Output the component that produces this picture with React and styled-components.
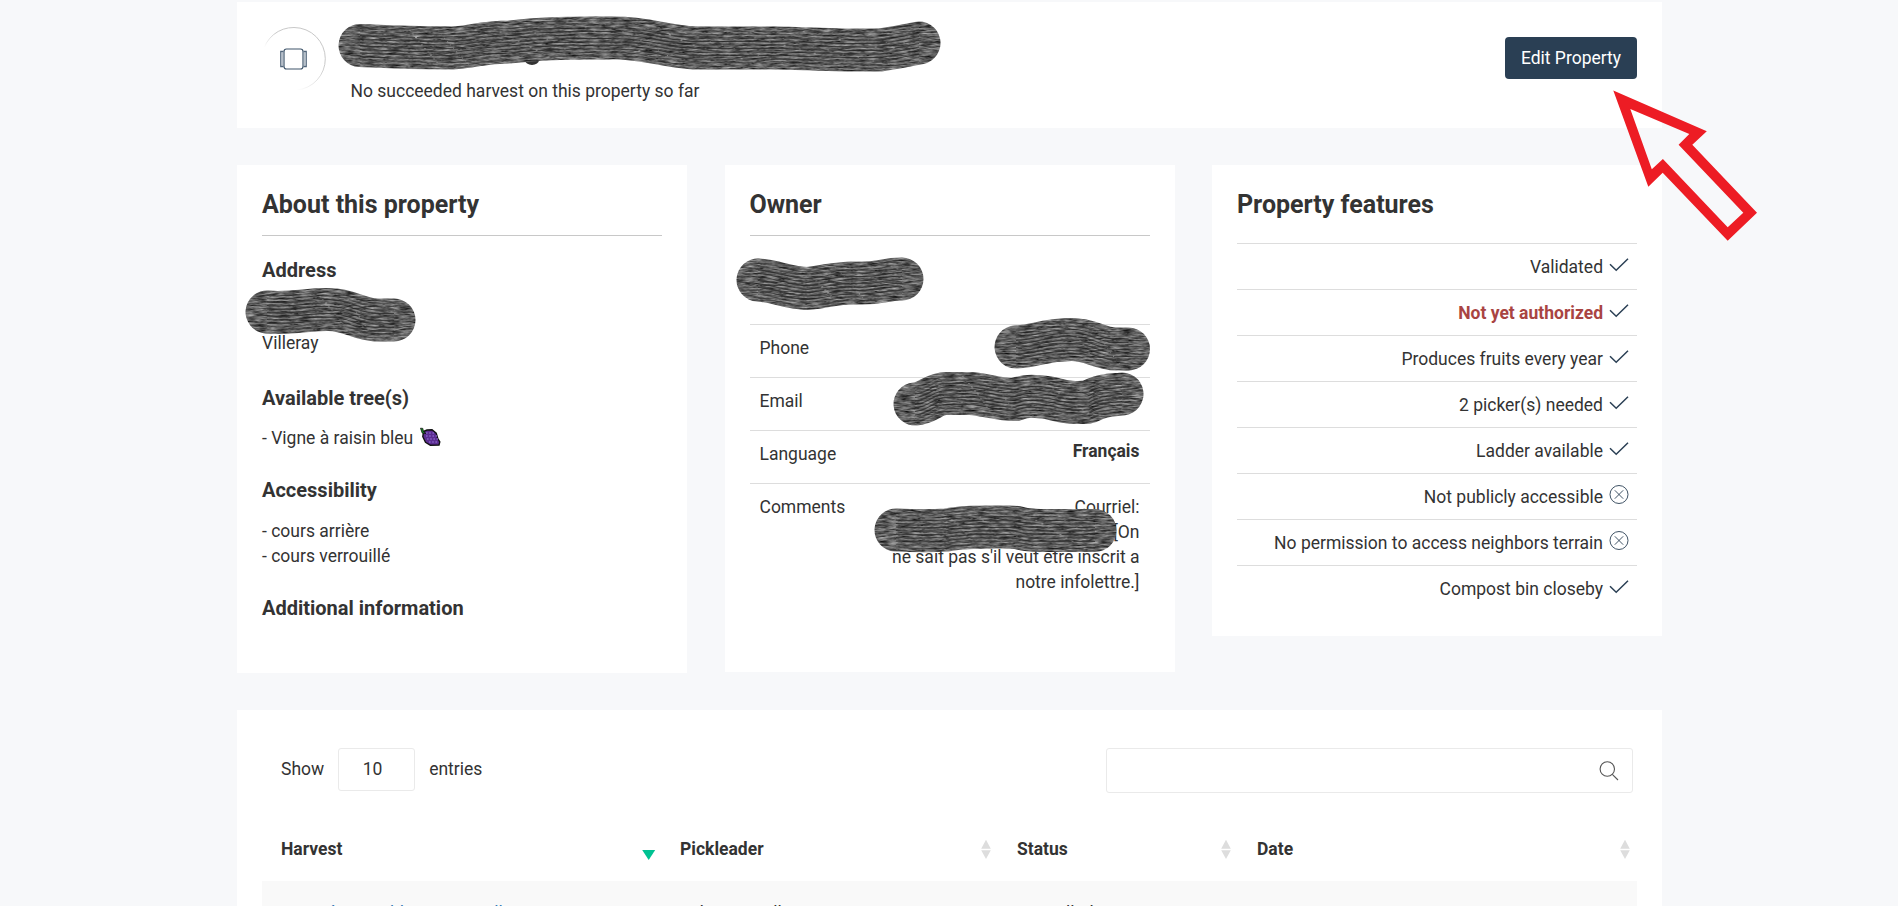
import React from "react";
import styled, { createGlobalStyle, css } from "styled-components";

const GlobalStyle = createGlobalStyle`
  *, *::before, *::after { box-sizing: border-box; }
  body {
    margin: 0;
    background: #f7f8fa;
    color: #333;
    font: 17.5px/25px Roboto, "Liberation Sans", sans-serif;
    overflow: hidden;
  }
`;

const Page = styled.div`
  position: relative;
  height: 906px;
  overflow: hidden;
`;

const Container = styled.main`
  width: 1425px;
  margin: 0 auto 0 237px;
  padding-top: 2px;
`;

const Header = styled.header`
  display: flex;
  height: 126px;
  padding: 20px 25px;
  background: #fff;
`;

const Avatar = styled.svg`
  width: 64px;
  height: 74px;
  flex: none;
`;

const HeaderText = styled.div`
  flex: 1;
  padding: 57px 0 0 24.5px;
`;

const Button = styled.button`
  width: 132px;
  height: 42px;
  margin-top: 15px;
  padding: 0;
  border: 0;
  border-radius: 4px;
  background: #2a3f54;
  color: #fff;
  font: inherit;
  white-space: nowrap;
`;

const Columns = styled.div`
  display: flex;
  align-items: flex-start;
  justify-content: space-between;
  margin: 37px 0;
`;

const Card = styled.section`
  width: 450px;
  height: ${(p) => p.$height}px;
  padding: 25px;
  background: #fff;
`;

const CardTitle = styled.h3`
  margin: 0;
  padding-top: 1px;
  height: ${(p) => (p.$ruled ? 46 : 53)}px;
  border-bottom: ${(p) => (p.$ruled ? "1px solid #c8c8c8" : "0")};
  font-size: 25px;
  line-height: 28px;
  font-weight: 700;
`;

const SectionTitle = styled.h5`
  margin: ${(p) => p.$top}px 0 ${(p) => p.$bottom}px;
  font-size: 20px;
  line-height: 21px;
  font-weight: 700;
`;

const Line = styled.div`
  display: flex;
  align-items: center;
  height: 25px;
  padding-top: 1px;
  white-space: nowrap;
`;

const OwnerName = styled.div`
  height: 88px;
`;

const OwnerRow = styled.div`
  display: flex;
  justify-content: space-between;
  min-height: 53px;
  padding: 11px 10px 9px;
  border-top: 1px solid #ddd;
`;

const OwnerValue = styled.div`
  width: 266px;
  text-align: right;
  ${(p) => p.$strong && css`
    font-weight: 700;
    margin-top: -3px;
  `}
`;

const Feature = styled.div`
  display: flex;
  justify-content: flex-end;
  gap: 6px;
  height: 46px;
  padding: 11px 8px 9px 0;
  border-top: 1px solid #ddd;
  color: ${(p) => (p.$alert ? "#a94442" : "#333")};
  font-weight: ${(p) => (p.$alert ? 700 : 400)};
`;

const FeatureIcon = styled.svg`
  width: 20px;
  height: 22px;
  margin-top: -1px;
  flex: none;
  fill: none;
  stroke: #2a3f54;
`;

const TableCard = styled.section`
  height: 220px;
  padding: 38px 25px 0;
  background: #fff;
`;

const TableTools = styled.div`
  display: flex;
  justify-content: space-between;
  padding: 0 4px 0 19px;
  height: 89px;
`;

const LengthControl = styled.label`
  display: flex;
  align-items: center;
  gap: 14.5px;
  height: 43px;
  padding-bottom: 1px;
`;

const LengthBox = styled.span`
  width: 77px;
  height: 43px;
  margin: 0 0 -1px -1px;
  padding: 8px 24px;
  border: 1px solid #eaeaea;
  border-radius: 3px;
`;

const SearchBox = styled.div`
  display: flex;
  justify-content: flex-end;
  width: 527px;
  height: 45px;
  padding: 12px 13px 0 0;
  border: 1px solid #eaeaea;
  border-radius: 3px;
`;

const TableRow = styled.div`
  display: grid;
  grid-template-columns: 399px 337px 240px 399px;
  ${(p) => p.$striped ? css`
    height: 80px;
    padding-top: 20px;
    background: #f9f9f9;
  ` : css`
    height: 44px;
    font-weight: 700;
  `}
`;

const Cell = styled.div`
  display: flex;
  justify-content: space-between;
  align-items: flex-start;
  padding: 0 4px 0 19px;
  white-space: nowrap;
  color: ${(p) => (p.$link ? "#337ab7" : "inherit")};
`;

const SortIcon = styled.svg`
  width: 16px;
  height: 25px;
  flex: none;
`;

const GrapeIcon = styled.svg`
  width: 22px;
  height: 22px;
  margin-left: 6px;
`;

const Markup = styled.svg`
  position: absolute;
  inset: 0;
  width: 1898px;
  height: 906px;
  pointer-events: none;
`;

const Check = () => (
  <FeatureIcon viewBox="0 0 20 22" strokeWidth="1.5">
    <path d="M1 10.3 7.2 16.2 19 4.8" />
  </FeatureIcon>
);

const CircledX = () => (
  <FeatureIcon viewBox="0 0 20 22" strokeWidth="0.9">
    <circle cx="10" cy="10.5" r="9" />
    <path d="m5.8 6.3 8.4 8.4m0-8.4-8.4 8.4" />
  </FeatureIcon>
);

const Grape = () => (
  <GrapeIcon viewBox="0 0 22 22">
    <path d="M4.5 4.5 8 3l5-.2 4.2 3.4 1.6 5.4 2 3.2-.8 3.3-8.6.2-4.9-3-2.7-5.6Z" fill="#5b2d91" stroke="#111" strokeWidth="1.4" />
    <path d="m1.5 1.2 2.3.2.6 3L7 6.6 3.2 6Z" fill="#159a24" stroke="#111" strokeWidth="0.8" />
    <path d="M7 6h9M7 9h11M8 12h11M10 15h9" stroke="#8560c4" strokeWidth="1.3" strokeDasharray="1.6 1.6" />
  </GrapeIcon>
);

const Sort = ({ active }) => (
  <SortIcon viewBox="0 0 16 25">
    {active ? (
      <path d="M1.2 13h13L7.7 23Z" fill="#00c292" />
    ) : (
      <path d="M3.2 11.7h9.6L8 2.8ZM3.2 13.2h9.6L8 22Z" fill="#ddd" />
    )}
  </SortIcon>
);

const features = [
  ["Validated", true],
  ["Not yet authorized", true, true],
  ["Produces fruits every year", true],
  ["2 picker(s) needed", true],
  ["Ladder available", true],
  ["Not publicly accessible", false],
  ["No permission to access neighbors terrain", false],
  ["Compost bin closeby", true],
];

const strokes = [
  "M360 45.5C390 47 430 48 452 48C475 47 480 42 510 42C550 37 585 38 615 38C645 38 665 46 694 48L780 48L845 50L880 50Q900 47 919 43",
  "M267 312C292 314 310 309 329 309.500C350 310 358 319 376 320H394",
  "M758 280C776 281 787 288 808 288.500C830 286 838 282 858 283C880 284 883 279 902 279",
  "M1016 347C1038 346 1041 340 1071 339.500C1090 339 1100 349 1116 349H1128.500",
  "M915 404C928 403 934 393.500 946 393.500H970C985 394 997 400 1015 399.500C1027 395 1035 396 1050 398C1067 403 1077 403 1089 402C1102 394 1115 395 1122 394",
  "M896 530C915 531 933 531 947 530C965 526 987 527 1010 527C1021 527 1018 530 1040 530.500H1095",
];

const bristles = [-17, -13.5, -10, -6.5, -3, 0.5, 4, 7.5, 11, 14.5, 18];

const Scribble = ({ d }) => (
  <g fill="none" strokeLinejoin="round">
    <path d={d} stroke="#5b5b5b" strokeWidth="43" strokeLinecap="round" filter="url(#grain)" />
    {bristles.map((y, i) => (
      <g key={y} transform={`translate(0 ${y})`}>
        <path d={d} stroke="#2a2a2a" strokeWidth="1.1" opacity={Math.abs(y) > 12 ? 0.4 : 0.75} strokeDasharray={`${49 + i * 3} 2 27 1`} />
        <path d={d} transform="translate(0 1.4)" stroke="#aaa" strokeWidth="0.8" opacity="0.35" strokeDasharray={`2 ${2 + (i % 3)} 17 2`} />
      </g>
    ))}
  </g>
);

export default function App() {
  return (
    <Page>
      <GlobalStyle />
      <Container>
        <Header>
          <Avatar viewBox="0 0 64 74">
            <defs>
              <linearGradient id="ring" x1="0" y1="0.7" x2="0.5" y2="0.3">
                <stop offset="0" stopColor="#c8c8c8" stopOpacity="0" />
                <stop offset="1" stopColor="#c8c8c8" />
              </linearGradient>
              <linearGradient id="ringEnd" x1="0" y1="1" x2="0.8" y2="0">
                <stop offset="0" stopColor="#c8c8c8" stopOpacity="0" />
                <stop offset="1" stopColor="#c8c8c8" />
              </linearGradient>
            </defs>
            <g fill="none">
              <path d="M.6 31A31.500 31.500 0 0 1 32 5.500" stroke="url(#ring)" />
              <path d="M32 5.500A31.300 31.300 0 0 1 63.300 36.800" stroke="#c8c8c8" />
              <path d="M63.300 36.800A31.300 31.300 0 0 1 35 68" stroke="url(#ringEnd)" />
              <rect x="22" y="27" width="19" height="20" rx="2.500" stroke="#3f556b" strokeWidth="1.200" />
              <path d="M21.500 29.500h-2.700v15h2.700M41.500 29.500h2.700v15h-2.700" stroke="#53677c" strokeWidth="1.300" />
              <path d="M20.300 30v14M42.700 30v14" stroke="#a4b0bd" />
            </g>
          </Avatar>
          <HeaderText>No succeeded harvest on this property so far</HeaderText>
          <Button>Edit Property</Button>
        </Header>

        <Columns>
          <Card $height={508}>
            <CardTitle $ruled>About this property</CardTitle>
            <SectionTitle $top={24} $bottom={24}>Address</SectionTitle>
            <Line />
            <Line>Villeray</Line>
            <SectionTitle $top={33} $bottom={16}>Available tree(s)</SectionTitle>
            <Line>- Vigne à raisin bleu <Grape /></Line>
            <SectionTitle $top={30} $bottom={17}>Accessibility</SectionTitle>
            <Line>- cours arrière</Line>
            <Line>- cours verrouillé</Line>
            <SectionTitle $top={30} $bottom={0}>Additional information</SectionTitle>
          </Card>

          <Card $height={507}>
            <CardTitle $ruled>Owner</CardTitle>
            <OwnerName />
            <OwnerRow><span>Phone</span></OwnerRow>
            <OwnerRow><span>Email</span></OwnerRow>
            <OwnerRow>
              <span>Language</span>
              <OwnerValue $strong>Français</OwnerValue>
            </OwnerRow>
            <OwnerRow>
              <span>Comments</span>
              <OwnerValue>Courriel:<br />[On<br />ne sait pas s'il veut être inscrit a<br />notre infolettre.]</OwnerValue>
            </OwnerRow>
          </Card>

          <Card $height={471}>
            <CardTitle>Property features</CardTitle>
            {features.map(([label, ok, alert]) => (
              <Feature key={label} $alert={alert}>
                <span>{label}</span>
                {ok ? <Check /> : <CircledX />}
              </Feature>
            ))}
          </Card>
        </Columns>

        <TableCard>
          <TableTools>
            <LengthControl>
              <span>Show</span>
              <LengthBox>10</LengthBox>
              <span>entries</span>
            </LengthControl>
            <SearchBox>
              <svg width="20" height="20" viewBox="0 0 20 20" fill="none" stroke="#555" strokeWidth="1.1">
                <ellipse cx="8.300" cy="8" rx="7.200" ry="7.300" />
                <path d="m13.300 13.300 5.700 5.700" />
              </svg>
            </SearchBox>
          </TableTools>
          <TableRow>
            <Cell>Harvest<Sort active /></Cell>
            <Cell>Pickleader<Sort /></Cell>
            <Cell>Status<Sort /></Cell>
            <Cell>Date<Sort /></Cell>
          </TableRow>
          <TableRow $striped>
            <Cell $link>Vigne à raisin bleu, cours Villeray</Cell>
            <Cell>John Connell</Cell>
            <Cell>Cancelled</Cell>
            <Cell />
          </TableRow>
        </TableCard>
      </Container>

      <Markup viewBox="0 0 1898 906">
        <defs>
          <filter id="grain" filterUnits="userSpaceOnUse" x="0" y="0" width="1898" height="906" colorInterpolationFilters="sRGB">
            <feTurbulence type="fractalNoise" baseFrequency="0.09 0.6" numOctaves="3" seed="4" result="noise" />
            <feColorMatrix in="noise" type="matrix" values="0.8 0 0 0 -0.03  0.8 0 0 0 -0.03  0.8 0 0 0 -0.03  0 0 0 0 1" result="gray" />
            <feComposite in="gray" in2="SourceGraphic" operator="in" />
          </filter>
        </defs>
        <ellipse cx="532" cy="60" rx="7" ry="5" fill="#333" />
        {strokes.map((d) => <Scribble key={d} d={d} />)}
        <path
          fill="#ed1c24"
          fillRule="evenodd"
          d="M1613.300 90.500 1706.800 131.300 1692.300 144.700 1757 212.700 1727.700 240.800 1662.700 172.700 1648.300 186.800ZM1630.300 109 1651.800 169.300 1662.900 159 1727.700 227.200 1743.300 212.700 1678.600 144.700 1689.300 134Z"
        />
      </Markup>
    </Page>
  );
}
